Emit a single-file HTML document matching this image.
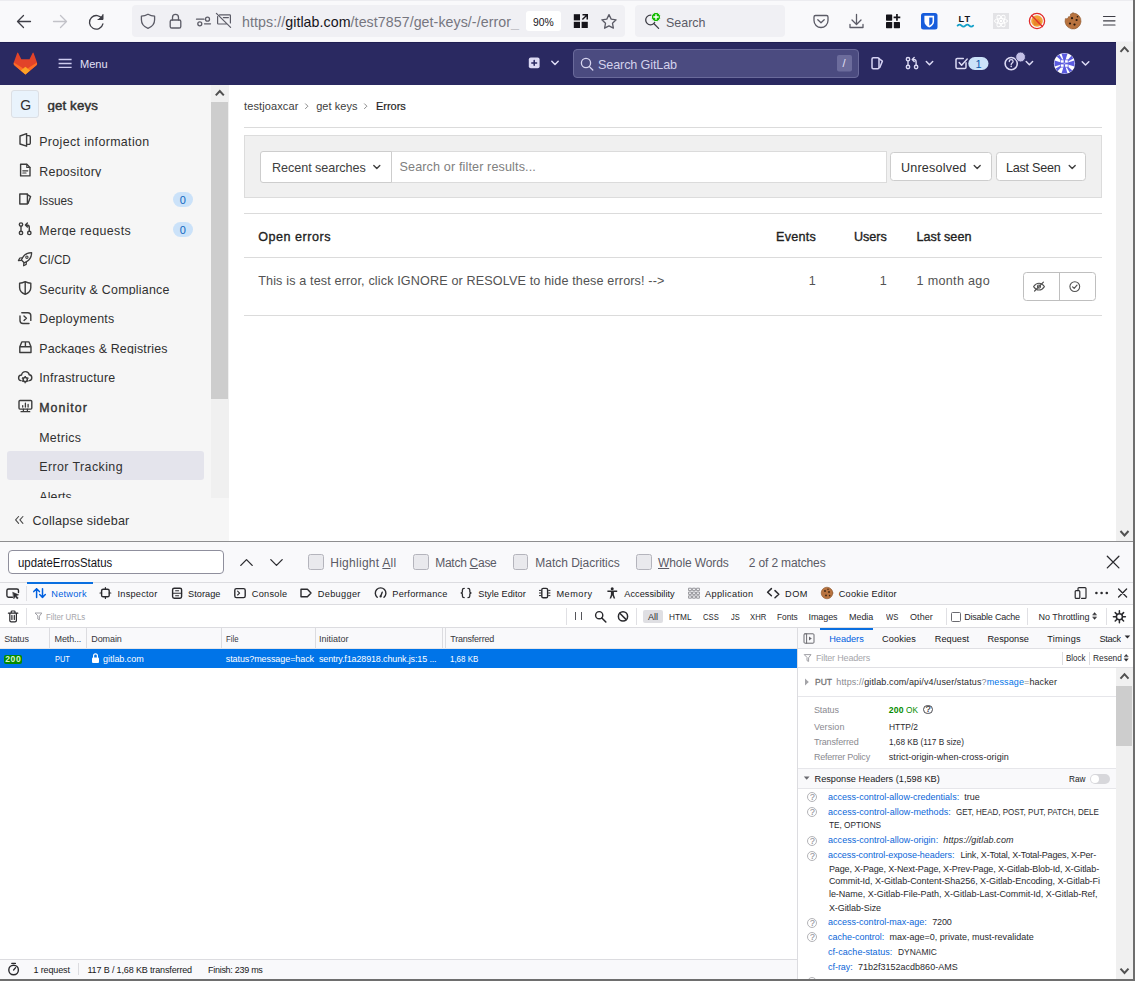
<!DOCTYPE html>
<html lang="en">
<head>
<meta charset="utf-8">
<title>Errors · get keys · GitLab</title>
<style>
*{box-sizing:border-box;margin:0;padding:0}
html,body{width:1135px;height:981px;overflow:hidden;background:#fff}
body{font-family:"Liberation Sans",sans-serif;color:#303030;position:relative;font-size:13px}
.a{position:absolute;white-space:nowrap}
svg{position:absolute;overflow:visible}
</style>
</head>
<body>
<div class="a" style="left:0px;top:0px;width:1133px;height:42px;background:#f9f9fb"></div>
<div class="a" style="left:132px;top:5px;width:493px;height:32px;background:#f0f0f4;border-radius:4px"></div>
<div class="a" style="left:635px;top:5px;width:150px;height:32px;background:#f0f0f4;border-radius:4px"></div>
<!-- ======== BROWSER CHROME ======== -->
<div class="a" style="left:0;top:0;width:1133px;height:1px;background:#ececf0"></div>
<div class="a" style="left:0;top:41px;width:1133px;height:1px;background:#f4f4f8"></div>
<svg style="left:0;top:0" width="1133" height="42" viewBox="0 0 1133 42" fill="none" stroke="#5b5b66" stroke-width="1.3" stroke-linecap="round" stroke-linejoin="round">
  <!-- back -->
  <path d="M30.5 21.5H17.5M23.5 15.5l-6 6 6 6" stroke="#3e3e46"/>
  <!-- forward (disabled) -->
  <path d="M53.5 21.5h13M60.5 15.5l6 6-6 6" stroke="#c2c2c8"/>
  <!-- reload -->
  <path d="M102.3 19.2a6.8 6.8 0 1 0 .6 4.6" stroke="#3e3e46"/>
  <path d="M103 14.5v5h-5" stroke="#3e3e46" fill="#3e3e46" stroke-width="1"/>
  <!-- shield -->
  <path d="M148 14.2c2.2 1.3 4.4 1.9 6.6 2v3.6c0 4-2.6 7-6.6 8.6-4-1.600-6.600-4.600-6.600-8.600v-3.600c2.200-.1 4.400-.7 6.600-2z"/>
  <!-- lock -->
  <rect x="170.200" y="20" width="10.600" height="8" rx="1.600"/>
  <path d="M172.500 20v-2.600a3 3 0 0 1 6 0V20"/>
  <!-- permissions -->
  <path d="M196.500 19.200h7.500M204.500 23.800h6"/>
  <circle cx="207.500" cy="19.200" r="2"/>
  <circle cx="199.800" cy="23.800" r="2"/>
  <!-- screen-share blocked -->
  <path d="M219.600 14.800h10a.8.800 0 0 1 .8.800v7.400M226.400 24h-8a.8.800 0 0 1-.8-.8v-6.600M223.400 17.600h5M216.400 13.400l14.200 14" stroke-width="1.200"/>
  <!-- container / qr icon -->
  <g fill="#15141a" stroke="none">
    <rect x="573.800" y="14.200" width="6.200" height="6.200"/>
    <rect x="573.800" y="21.800" width="6.200" height="6.200"/>
    <rect x="581.600" y="21.800" width="6.200" height="6.200"/>
    <path d="M582.500 14h5.500v5.500h-1.500v-3l-3.600 3.600-1-1 3.600-3.600h-3z"/>
  </g>
  <!-- star -->
  <path d="M609 14.600l2.200 4.500 4.900.7-3.600 3.500.9 4.900-4.400-2.300-4.400 2.300.9-4.900-3.600-3.500 4.900-.7z"/>
  <!-- search magnifier + green plus -->
  <circle cx="650.500" cy="20" r="4.800" stroke="#3e3e46"/>
  <path d="M654 23.800l4.600 4.600" stroke="#3e3e46"/>
  <circle cx="656" cy="17" r="4.600" fill="#12bc00" stroke="#f0f0f4" stroke-width="1"/>
  <path d="M653.800 17h4.400M656 14.800v4.400" stroke="#fff" stroke-width="1.400"/>
  <!-- pocket -->
  <path d="M815.500 15.500h11a1.500 1.500 0 0 1 1.500 1.500v3.500a7 7 0 0 1-14 0V17a1.500 1.500 0 0 1 1.500-1.500z"/>
  <path d="M817.800 19.800l3.200 3 3.200-3"/>
  <!-- download -->
  <path d="M856.500 14.500v9.500M852 20l4.500 4.500L861 20M850 24.500v3h13v-3"/>
  <!-- extensions -->
  <g fill="#15141a" stroke="none">
    <rect x="886" y="14.500" width="6.200" height="6.200" rx=".6"/>
    <rect x="886" y="22" width="6.200" height="6.200" rx=".6"/>
    <rect x="893.800" y="22" width="6.200" height="6.200" rx=".6"/>
    <path d="M896.100 14h1.700v2.500h2.500v1.700h-2.500v2.500h-1.700v-2.500h-2.500v-1.700h2.500z"/>
  </g>
  <!-- bitwarden -->
  <rect x="921" y="13" width="16.500" height="16.500" rx="2.500" fill="#175ddc" stroke="none"/>
  <path d="M924.400 15.800h9.700v5.600c0 2.800-2.200 4.800-4.850 6-2.650-1.200-4.850-3.200-4.850-6z" fill="#fff" stroke="none"/>
  <path d="M929.250 17.400h3.300v4.100c0 1.800-1.400 3.200-3.300 4.200z" fill="#175ddc" stroke="none"/>
  <!-- languagetool wave -->
  <path d="M957.600 25.600c1.300-1.400 2.600-1.400 3.900 0s2.600 1.400 3.900 0 2.600-1.400 3.900 0 2.600 1.400 3.900 0" stroke="#14a0c8" stroke-width="1.800"/>
  <!-- react devtools (disabled) -->
  <rect x="993" y="13" width="16" height="16" fill="#e3e3e6" stroke="none"/>
  <g stroke="#fff" stroke-width="1" >
    <ellipse cx="1001" cy="21" rx="6.500" ry="2.500"/>
    <ellipse cx="1001" cy="21" rx="6.500" ry="2.500" transform="rotate(60 1001 21)"/>
    <ellipse cx="1001" cy="21" rx="6.500" ry="2.500" transform="rotate(120 1001 21)"/>
  </g>
  <circle cx="1001" cy="21" r="1.200" fill="#fff" stroke="none"/>
  <!-- cookie blocker -->
  <circle cx="1037" cy="21" r="5.800" fill="#f2a23a" stroke="none"/>
  <path d="M1033 19.500l3 1.500 2-2.500 3 3-2 3.500-5 .5z" fill="#e8862a" stroke="none"/>
  <circle cx="1037" cy="21" r="7.600" stroke="#e02b2b" stroke-width="1.300"/>
  <path d="M1031.600 15.600l10.800 10.800" stroke="#e02b2b" stroke-width="1.400"/>
  <!-- cookie -->
  <path d="M1073 13a8 8 0 1 1-7.600 5.600c1.500.6 3-.3 3-1.800 1.600.1 2.500-1.200 2-2.600.9-.5 1.700-.9 2.600-1.200z" fill="#b8733f" stroke="#8a5226" stroke-width=".6"/>
  <g fill="#2a1a10" stroke="none">
    <circle cx="1072" cy="18.200" r="1.100"/><circle cx="1076.600" cy="20" r="1.100"/>
    <circle cx="1070" cy="23.500" r="1.100"/><circle cx="1074.500" cy="24.600" r="1.100"/><circle cx="1077.500" cy="16.800" r=".8"/>
  </g>
  <!-- hamburger -->
  <path d="M1103.500 16.500h11.500M1103.500 20.800h11.500M1103.500 25h11.500" stroke="#3e3e46" stroke-width="1.200"/>
</svg>
<div class="a" id="t0" style="left:242px;top:12px;font-size:14.2px;line-height:20px;color:#76767f;letter-spacing:0.074px">https://<span style="color:#15141a">gitlab.com</span>/test7857/get-keys/-/error</div>
<div class="a" id="t1" style="left:511px;top:12px;font-size:14.2px;line-height:20px;color:#c4c4ca">_</div>
<div class="a" style="left:526px;top:11px;width:35px;height:19.5px;background:#fff;border-radius:3px"></div>
<div class="a" id="t2" style="left:533px;top:14px;font-size:11.2px;line-height:16px;color:#15141a;transform:scaleX(0.9261);transform-origin:0 50%">90%</div>
<div class="a" id="t3" style="left:666px;top:13px;font-size:13.6px;line-height:19px;color:#5b5b66;transform:scaleX(0.9169);transform-origin:0 50%">Search</div>
<div class="a" id="t4" style="left:958.4px;top:12px;font-size:9.2px;line-height:14px;color:#15141a;font-weight:bold;letter-spacing:1.127px">LT</div>
<div class="a" style="left:0px;top:42px;width:1116px;height:43px;background:#2a2961"></div>
<div class="a" style="left:0px;top:42px;width:1116px;height:1px;background:#1f1e52"></div>
<div class="a" style="left:1116px;top:42px;width:17px;height:499px;background:#f0f0f0"></div>
<!-- ======== GITLAB NAV ======== -->
<svg style="left:0;top:42px" width="1116" height="43" viewBox="0 42 1116 43" fill="none" stroke-linecap="round" stroke-linejoin="round">
  <!-- logo (tanuki) -->
  <g stroke="none">
    <path d="M17.200 52.900q.5-.7 1 .1l3.100 6.300h8.200l3.100-6.300q.5-.8 1-.1L37 62.400q.6 2-.8 3.200L25.400 74.500 14.600 65.600q-1.400-1.200-.8-3.200z" fill="#e24329"/>
    <path d="M13.800 62.400l7.600 4.800 4 3.200v4.100L14.600 65.600q-1.400-1.200-.8-3.200z" fill="#fc6d26"/>
    <path d="M37 62.400l-7.600 4.800-4 3.200v4.100l10.800-8.900q1.400-1.200.8-3.200z" fill="#fc6d26"/>
    <path d="M25.400 66.800l4.600 3.800-4.600 3.900-4.600-3.900z" fill="#fca326"/>
  </g>
  <!-- hamburger -->
  <path d="M58.600 59.500h13M58.600 63.500h13M58.600 67.400h13" stroke="#cfcdf0" stroke-width="1.400" stroke-linecap="butt"/>
  <!-- plus square -->
  <rect x="528.800" y="57.500" width="10.800" height="10.800" rx="2" fill="#dcdaf4" stroke="none"/>
  <path d="M531.800 62.900h4.800M534.200 60.500v4.800" stroke="#292961" stroke-width="1.500"/>
  <path d="M551.800 61.300l3.200 3.200 3.200-3.200" stroke="#dcdaf4" stroke-width="1.500"/>
  <!-- search box -->
  <rect x="573.500" y="49.500" width="285" height="28" rx="3.500" fill="#4b4b80" stroke="#6a6a9b" stroke-width="1"/>
  <circle cx="586" cy="63" r="4.600" stroke="#d8d6f0" stroke-width="1.300"/>
  <path d="M589.400 66.600l3.400 3.400" stroke="#d8d6f0" stroke-width="1.300"/>
  <rect x="837" y="55" width="15" height="16.500" rx="2" fill="#6c6c9c" stroke="none"/>
  <!-- issues icon -->
  <rect x="872" y="57.800" width="7" height="10.900" rx="1.200" stroke="#d5d2f3" stroke-width="1.500"/>
  <path d="M879 58.600l3.400 2.500-2.600 6.400" stroke="#d5d2f3" stroke-width="1.500"/>
  <!-- merge request icon -->
  <g stroke="#dcdaf4" stroke-width="1.400">
    <circle cx="908" cy="59.200" r="1.700"/><circle cx="908" cy="67" r="1.700"/><circle cx="916.100" cy="67" r="1.700"/>
    <path d="M908 61v4.200M916.100 65.200v-3.400c0-1.500-.8-2.400-2.400-2.400h-1.200M914.200 57.400l-2 2 2 2"/>
    <path d="M926.300 61.500l3.200 3.200 3.200-3.200" stroke-width="1.500"/>
  </g>
  <!-- todos icon -->
  <path d="M966 62.800v4.400a1.300 1.300 0 0 1-1.300 1.300h-7.400a1.300 1.300 0 0 1-1.300-1.300v-7.400a1.300 1.300 0 0 1 1.300-1.300h6" stroke="#dcdaf4" stroke-width="1.500"/>
  <path d="M959.200 62.600l2.400 2.600 5.600-6.200" stroke="#dcdaf4" stroke-width="1.500"/>
  <rect x="968.300" y="57" width="20.200" height="13" rx="6.500" fill="#cbe2f9" stroke="none"/>
  <!-- help -->
  <circle cx="1011.200" cy="63.600" r="6.100" stroke="#dcdaf4" stroke-width="1.600"/>
  <path d="M1009.300 61.500c0-1.100.8-1.800 1.900-1.800s1.900.7 1.900 1.700c0 1.500-1.900 1.500-1.900 3" stroke="#dcdaf4" stroke-width="1.300"/>
  <circle cx="1011.200" cy="66.400" r=".8" fill="#dcdaf4" stroke="none"/>
  <circle cx="1020.600" cy="57" r="4.900" fill="#c3c0e6" stroke="#2a2961" stroke-width=".8"/>
  <path d="M1026.200 61.500l3.200 3.200 3.200-3.200" stroke="#dcdaf4" stroke-width="1.500"/>
  <!-- avatar (identicon) -->
  <circle cx="1064.500" cy="63.500" r="10.600" fill="#fff" stroke="none"/>
  <g fill="#5b5be0" stroke="none">
    <path d="M1064.500 63.500l-3-10 6 0z"/><path d="M1064.500 63.500l3 10-6 0z"/>
    <path d="M1064.500 63.500l-10-3 0 6z"/><path d="M1064.500 63.500l10 3 0-6z"/>
    <path d="M1064.500 63.500l-7.800-7 2.800-1.800z"/><path d="M1064.500 63.500l7.800 7-2.800 1.800z"/>
    <path d="M1064.500 63.500l7-7.800 1.800 2.800z"/><path d="M1064.500 63.500l-7 7.800-1.800-2.800z"/>
  </g>
  <g fill="#fff" stroke="#5b5be0" stroke-width=".7">
    <rect x="1060.800" y="59.800" width="3.200" height="3.200"/><rect x="1065" y="59.800" width="3.200" height="3.200"/>
    <rect x="1060.800" y="64" width="3.200" height="3.200"/><rect x="1065" y="64" width="3.200" height="3.200"/>
  </g>
  <path d="M1082.200 61.700l3.300 3.300 3.300-3.300" stroke="#dcdaf4" stroke-width="1.500"/>
</svg>
<div class="a" id="t5" style="left:80.2px;top:56px;font-size:11.6px;line-height:16px;color:#e3e1f7;transform:scaleX(0.9512);transform-origin:0 50%">Menu</div>
<div class="a" id="t6" style="left:598px;top:56px;font-size:12.6px;line-height:18px;color:#d4d2ec;letter-spacing:-0.117px">Search GitLab</div>
<div class="a" id="t7" style="left:842.5px;top:55px;font-size:11px;line-height:16px;color:#e3e1f7">/</div>
<div class="a" id="t8" style="left:975.5px;top:56px;font-size:11px;line-height:16px;color:#0b5cad">1</div>
<div class="a" style="left:0px;top:85px;width:229px;height:456px;background:#f6f6f6"></div>
<div class="a" style="left:211px;top:85px;width:18px;height:413px;background:#f0f0f0"></div>
<div class="a" style="left:211px;top:102px;width:17px;height:296.5px;background:#cdcdcd"></div>
<div class="a" style="left:7px;top:451px;width:197px;height:28.6px;background:#e4e4ec;border-radius:3px"></div>
<div class="a" style="left:11px;top:90px;width:28px;height:28px;background:#e9f3fc;border:1px solid #dcdfe4;border-radius:3px"></div>
<div class="a" id="t9" style="left:20.3px;top:95px;font-size:14px;line-height:20px;color:#303030">G</div>
<div class="a" id="t10" style="left:47.4px;top:96px;font-size:13.3px;line-height:19px;color:#303030;letter-spacing:0.134px;-webkit-text-stroke:0.45px currentColor;height:15.6px;overflow:hidden">get keys</div>
<div class="a" id="t11" style="left:39.2px;top:133px;font-size:12.4px;line-height:18px;color:#303030;letter-spacing:0.373px">Project information</div>
<div class="a" id="t12" style="left:39.2px;top:163px;font-size:12.4px;line-height:18px;color:#303030;letter-spacing:0.317px;height:14.3px;overflow:hidden">Repository</div>
<div class="a" id="t13" style="left:39.2px;top:192px;font-size:12.4px;line-height:18px;color:#303030;transform:scaleX(0.9494);transform-origin:0 50%">Issues</div>
<div class="a" id="t14" style="left:39.2px;top:222px;font-size:12.4px;line-height:18px;color:#303030;letter-spacing:0.422px;height:14.3px;overflow:hidden">Merge requests</div>
<div class="a" id="t15" style="left:39.2px;top:251px;font-size:12.4px;line-height:18px;color:#303030;transform:scaleX(0.9427);transform-origin:0 50%">CI/CD</div>
<div class="a" id="t16" style="left:39.2px;top:281px;font-size:12.4px;line-height:18px;color:#303030;letter-spacing:0.246px;height:14.3px;overflow:hidden">Security &amp; Compliance</div>
<div class="a" id="t17" style="left:39.2px;top:310px;font-size:12.4px;line-height:18px;color:#303030;letter-spacing:0.272px">Deployments</div>
<div class="a" id="t18" style="left:39.2px;top:340px;font-size:12.4px;line-height:18px;color:#303030;letter-spacing:0.178px;height:14.3px;overflow:hidden">Packages &amp; Registries</div>
<div class="a" id="t19" style="left:39.2px;top:369px;font-size:12.4px;line-height:18px;color:#303030;letter-spacing:0.236px">Infrastructure</div>
<div class="a" id="t20" style="left:39.2px;top:399px;font-size:12.4px;line-height:18px;color:#303030;letter-spacing:1.053px;-webkit-text-stroke:0.35px currentColor">Monitor</div>
<div class="a" id="t21" style="left:39.2px;top:429px;font-size:12.4px;line-height:18px;color:#303030;letter-spacing:0.323px">Metrics</div>
<div class="a" id="t22" style="left:39.2px;top:458px;font-size:12.4px;line-height:18px;color:#303030;letter-spacing:0.428px">Error Tracking</div>
<div class="a" id="t23" style="left:39.2px;top:488px;font-size:12.4px;line-height:18px;color:#303030;letter-spacing:0.185px;height:9.9px;overflow:hidden">Alerts</div>
<div class="a" style="left:172.7px;top:192.3px;width:20.2px;height:15px;background:#cbe2f9;border-radius:8px"></div>
<div class="a" id="t24" style="left:179.7px;top:192px;font-size:11px;line-height:16px;color:#1068bf">0</div>
<div class="a" style="left:172.7px;top:222px;width:20.2px;height:15px;background:#cbe2f9;border-radius:8px"></div>
<div class="a" id="t25" style="left:179.7px;top:222px;font-size:11px;line-height:16px;color:#1068bf">0</div>
<div class="a" id="t26" style="left:32.5px;top:512px;font-size:12.6px;line-height:18px;color:#303030;letter-spacing:0.199px">Collapse sidebar</div>
<svg style="left:0;top:85px" width="229" height="456" viewBox="0 85 229 456" fill="none" stroke="#3c3c3c" stroke-width="1.4" stroke-linecap="round" stroke-linejoin="round">
  <!-- project information -->
  <path d="M20 136l6.600-2.400v12.600L20 144z"/>
  <path d="M26.600 135.600h2.400a1.300 1.300 0 0 1 1.300 1.300v6.200a1.300 1.300 0 0 1-1.300 1.300h-2.400"/>
  <!-- repository -->
  <path d="M20.600 164.300h6.200l3.200 3.200v8.400h-9.400z"/>
  <path d="M26.800 164.300v3.200h3.200" stroke-width="1.200"/>
  <path d="M22.800 170.800h5M22.800 173h3.200" stroke-width="1.200"/>
  <!-- issues -->
  <path d="M19.800 194h7.600v10h-7.600z"/>
  <path d="M27.400 194.600l3.200 2-2.600 6.800" />
  <!-- merge requests -->
  <circle cx="21" cy="224.600" r="1.700"/><circle cx="21" cy="232.900" r="1.700"/><circle cx="29.300" cy="232.900" r="1.700"/>
  <path d="M21 226.400v4.700M29.300 231.100v-3.600c0-1.600-.8-2.500-2.400-2.500h-1M27.400 223l-2 2 2 2"/>
  <!-- ci/cd rocket -->
  <path d="M31.600 252.600c-3.800 0-7 1.500-9 5l-1.200 2.400 2.800 2.800 2.400-1.200c3.500-2 5-5.200 5-9z" stroke-width="1.300"/>
  <path d="M22.400 257.800l-2.600.2-1.400 2.600 2.800-.2M26.400 261.800l-.2 2.600-2.600 1.400.2-2.800" stroke-width="1.200"/>
  <circle cx="26.900" cy="257.200" r="1.150" stroke-width="1.100"/>
  <!-- security -->
  <path d="M25.200 281.700c2 1 3.800 1.500 5.600 1.600v4.100c0 3.300-2.200 5.500-5.600 6.900-3.400-1.400-5.600-3.600-5.600-6.900v-4.100c1.800-.1 3.600-.6 5.600-1.600zM25.200 281.700v12.600"/>
  <!-- deployments -->
  <path d="M21.800 312.800h6a3 3 0 0 1 3 3v4.600M29 323.500h-6a3 3 0 0 1-3-3v-4.600"/>
  <path d="M24 316l2.400 2.200-2.400 2.200"/>
  <!-- packages -->
  <path d="M21.800 341.900h7.200l2 4.800v5.800h-11.200v-5.800zM19.800 346.700h11.200M25.400 341.900v4.800"/>
  <!-- infrastructure -->
  <path d="M21 380.600c-1.600-.2-2.400-1.400-2.400-2.700 0-1.700 1.300-2.900 2.900-2.900.5-2.200 2-3.400 3.900-3.400 2 0 3.500 1.300 3.900 3.200 1.600.2 2.500 1.400 2.500 2.900 0 1.500-1 2.700-2.500 2.900"/>
  <circle cx="25.2" cy="379.6" r="2.100" stroke-width="1.500" fill="#f6f6f6"/>
  <path d="M27.45 380.90L28.40 381.45M25.20 382.20L25.20 383.30M22.95 380.90L22.00 381.45M22.95 378.30L22.00 377.75M25.20 377.00L25.20 375.90M27.45 378.30L28.40 377.75" stroke-width="1.500" stroke-linecap="butt"/>
  <!-- monitor -->
  <rect x="19" y="400.500" width="12.800" height="8.600" rx="1"/>
  <path d="M23.400 409.200v2.200M27.400 409.200v2.200M21 411.700h8.800" stroke-width="1.200"/>
  <path d="M22.700 405.600v1.400M25.400 403.200v3.800M28.100 404.400v2.600" stroke-width="1.300"/>
  <!-- collapse chevrons -->
  <path d="M18.600 516.500l-3 3.400 3 3.400M22.900 516.500l-3 3.400 3 3.400" stroke="#4a4a4a" stroke-width="1.100"/>
  <!-- scrollbar arrow -->
  <path d="M215.800 95.400l4-4.400 4 4.400" stroke="#505050" stroke-width="2" stroke-linecap="butt" stroke-linejoin="miter"/>
</svg>
<div class="a" id="t27" style="left:244px;top:98px;font-size:11px;line-height:16px;color:#404040;letter-spacing:0.118px">testjoaxcar</div>
<div class="a" id="t28" style="left:316.2px;top:98px;font-size:11px;line-height:16px;color:#404040;letter-spacing:0.041px">get keys</div>
<div class="a" id="t29" style="left:376px;top:98px;font-size:11px;line-height:16px;color:#1f1f1f;letter-spacing:-0.026px;-webkit-text-stroke:0.2px currentColor">Errors</div>
<div class="a" style="left:244px;top:127px;width:858px;height:1px;background:#dbdbdb"></div>
<div class="a" style="left:244px;top:135px;width:858px;height:63px;background:#f0f0f0;border:1px solid #dcdcdc"></div>
<div class="a" style="left:260px;top:151px;width:132px;height:31.5px;background:#fff;border:1px solid #cdcdcd;border-radius:3px 0 0 3px"></div>
<div class="a" style="left:391px;top:151px;width:496px;height:31.5px;background:#fff;border:1px solid #dbdbdb;border-left:1px solid #cdcdcd"></div>
<div class="a" id="t30" style="left:272px;top:159px;font-size:12.6px;line-height:18px;color:#404040;letter-spacing:-0.048px">Recent searches</div>
<div class="a" id="t31" style="left:399.5px;top:158px;font-size:12.6px;line-height:18px;color:#808080;letter-spacing:0.130px">Search or filter results...</div>
<div class="a" style="left:890px;top:152px;width:101.5px;height:29px;background:#fff;border:1px solid #cdcdcd;border-radius:3.5px"></div>
<div class="a" style="left:996px;top:152px;width:89.5px;height:29px;background:#fff;border:1px solid #cdcdcd;border-radius:3.5px"></div>
<div class="a" id="t32" style="left:901px;top:159px;font-size:12.6px;line-height:18px;color:#303030;letter-spacing:0.180px">Unresolved</div>
<div class="a" id="t33" style="left:1006px;top:159px;font-size:12.6px;line-height:18px;color:#303030;letter-spacing:-0.247px">Last Seen</div>
<div class="a" style="left:244px;top:213px;width:858px;height:1px;background:#dbdbdb"></div>
<div class="a" id="t34" style="left:258.2px;top:228px;font-size:12.6px;line-height:18px;color:#1f1f1f;letter-spacing:0.509px;-webkit-text-stroke:0.35px currentColor">Open errors</div>
<div class="a" id="t35" style="left:776px;top:228px;font-size:12.6px;line-height:18px;color:#1f1f1f;letter-spacing:0.247px;-webkit-text-stroke:0.35px currentColor">Events</div>
<div class="a" id="t36" style="left:854px;top:228px;font-size:12.6px;line-height:18px;color:#1f1f1f;letter-spacing:-0.018px;-webkit-text-stroke:0.35px currentColor">Users</div>
<div class="a" id="t37" style="left:916.5px;top:228px;font-size:12.6px;line-height:18px;color:#1f1f1f;letter-spacing:0.042px;-webkit-text-stroke:0.35px currentColor">Last seen</div>
<div class="a" style="left:244px;top:257px;width:858px;height:1px;background:#dbdbdb"></div>
<div class="a" id="t38" style="left:258.2px;top:272px;font-size:12.6px;line-height:18px;color:#525252;letter-spacing:0.142px">This is a test error, click IGNORE or RESOLVE to hide these errors! --&gt;</div>
<div class="a" id="t39" style="left:808.7px;top:272px;font-size:12.6px;line-height:18px;color:#525252">1</div>
<div class="a" id="t40" style="left:879.7px;top:272px;font-size:12.6px;line-height:18px;color:#525252">1</div>
<div class="a" id="t41" style="left:916.5px;top:272px;font-size:12.6px;line-height:18px;color:#525252;letter-spacing:0.315px">1 month ago</div>
<div class="a" style="left:1023px;top:272px;width:73px;height:29px;background:#fff;border:1px solid #bfbfbf;border-radius:3.5px"></div>
<div class="a" style="left:1059px;top:272px;width:1px;height:29px;background:#bfbfbf"></div>
<div class="a" style="left:244px;top:315px;width:858px;height:1px;background:#dbdbdb"></div>
<svg style="left:229px;top:85px" width="887" height="456" viewBox="229 85 887 456" fill="none" stroke="#525252" stroke-width="1.200" stroke-linecap="round" stroke-linejoin="round">
  <!-- breadcrumb separators -->
  <path d="M305.500 103.800l2.400 2.400-2.400 2.400M364.500 103.800l2.400 2.400-2.400 2.400" stroke="#8a8a8a" stroke-width="1"/>
  <!-- dropdown chevrons -->
  <path d="M373.800 165.600l3 3 3-3" stroke="#404040" stroke-width="1.400"/>
  <path d="M974.200 165.600l3 3 3-3" stroke="#404040" stroke-width="1.400"/>
  <path d="M1069.200 165.600l3 3 3-3" stroke="#404040" stroke-width="1.400"/>
  <!-- eye-slash -->
  <path d="M1033.600 286.600c1.400-2.300 3.200-3.400 5.400-3.400s4 1.100 5.400 3.400c-1.400 2.300-3.200 3.400-5.400 3.400s-4-1.100-5.400-3.400z" stroke-width="1.100"/>
  <circle cx="1039" cy="286.600" r="1.600" stroke-width="1.100"/>
  <path d="M1034.600 291l8.800-8.800" stroke-width="1.200"/>
  <!-- check circle -->
  <circle cx="1074.800" cy="286.600" r="4.900" stroke-width="1.100"/>
  <path d="M1072.600 286.800l1.600 1.600 2.800-3.200" stroke-width="1.200"/>
  <!-- page scrollbar arrows -->
  <path d="M1120.500 51.800l4-4.400 4 4.400" stroke="#505050" stroke-width="2" stroke-linecap="butt" stroke-linejoin="miter"/>
  <path d="M1120.500 531l4 4.400 4-4.400" stroke="#505050" stroke-width="2" stroke-linecap="butt" stroke-linejoin="miter"/>
</svg>
<div class="a" style="left:0px;top:541px;width:1133px;height:1px;background:#8e8e90"></div>
<div class="a" style="left:0px;top:542px;width:1133px;height:40px;background:#f9f9fb"></div>
<div class="a" style="left:8px;top:550px;width:215.5px;height:24px;background:#fff;border:1px solid #8f8f9d;border-radius:4px"></div>
<div class="a" id="t42" style="left:17.5px;top:554px;font-size:12px;line-height:18px;color:#15141a;transform:scaleX(0.9486);transform-origin:0 50%">updateErrosStatus</div>
<div class="a" style="left:308.25px;top:554.25px;width:15.5px;height:15.5px;background:#e9e9ed;border:1px solid #b4b4bc;border-radius:2.5px"></div>
<div class="a" style="left:413.25px;top:554.25px;width:15.5px;height:15.5px;background:#e9e9ed;border:1px solid #b4b4bc;border-radius:2.5px"></div>
<div class="a" style="left:512.75px;top:554.25px;width:15.5px;height:15.5px;background:#e9e9ed;border:1px solid #b4b4bc;border-radius:2.5px"></div>
<div class="a" style="left:636px;top:554.25px;width:15.5px;height:15.5px;background:#e9e9ed;border:1px solid #b4b4bc;border-radius:2.5px"></div>
<div class="a" id="t43" style="left:330.25px;top:554px;font-size:12px;line-height:18px;color:#5b5b66;letter-spacing:0.270px">Highlight <u>A</u>ll</div>
<div class="a" id="t44" style="left:435.25px;top:554px;font-size:12px;line-height:18px;color:#5b5b66;letter-spacing:-0.280px">Match <u>C</u>ase</div>
<div class="a" id="t45" style="left:535.25px;top:554px;font-size:12px;line-height:18px;color:#5b5b66;letter-spacing:-0.013px">Match D<u>i</u>acritics</div>
<div class="a" id="t46" style="left:658px;top:554px;font-size:12px;line-height:18px;color:#5b5b66;letter-spacing:-0.097px"><u>W</u>hole Words</div>
<div class="a" id="t47" style="left:748.75px;top:554px;font-size:12px;line-height:18px;color:#5b5b66;letter-spacing:-0.141px">2 of 2 matches</div>
<div class="a" style="left:0px;top:582px;width:1133px;height:22.5px;background:#f9f9fb;border-top:1px solid #dcdce0"></div>
<div class="a" style="left:0px;top:604px;width:1133px;height:1px;background:#dcdce0"></div>
<div class="a" style="left:27px;top:582px;width:65.5px;height:2px;background:#0a6fe0"></div>
<div class="a" style="left:26px;top:586px;width:1px;height:15px;background:#e0e0e4"></div>
<div class="a" id="t48" style="left:51.25px;top:587px;font-size:9.2px;line-height:14px;color:#0060df;letter-spacing:0.257px">Network</div>
<div class="a" id="t49" style="left:117.5px;top:587px;font-size:9.2px;line-height:14px;color:#18181a;letter-spacing:0.245px">Inspector</div>
<div class="a" id="t50" style="left:188px;top:587px;font-size:9.2px;line-height:14px;color:#18181a;letter-spacing:0.045px">Storage</div>
<div class="a" id="t51" style="left:251.75px;top:587px;font-size:9.2px;line-height:14px;color:#18181a;letter-spacing:0.290px">Console</div>
<div class="a" id="t52" style="left:317.75px;top:587px;font-size:9.2px;line-height:14px;color:#18181a;letter-spacing:0.330px">Debugger</div>
<div class="a" id="t53" style="left:392.25px;top:587px;font-size:9.2px;line-height:14px;color:#18181a;letter-spacing:0.263px">Performance</div>
<div class="a" id="t54" style="left:478.25px;top:587px;font-size:9.2px;line-height:14px;color:#18181a;letter-spacing:0.043px">Style Editor</div>
<div class="a" id="t55" style="left:556.5px;top:587px;font-size:9.2px;line-height:14px;color:#18181a;letter-spacing:0.469px">Memory</div>
<div class="a" id="t56" style="left:624.25px;top:587px;font-size:9.2px;line-height:14px;color:#18181a;letter-spacing:0.035px">Accessibility</div>
<div class="a" id="t57" style="left:705px;top:587px;font-size:9.2px;line-height:14px;color:#18181a;letter-spacing:0.322px">Application</div>
<div class="a" id="t58" style="left:785px;top:587px;font-size:9.2px;line-height:14px;color:#18181a;letter-spacing:0.521px">DOM</div>
<div class="a" id="t59" style="left:838.75px;top:587px;font-size:9.2px;line-height:14px;color:#18181a;letter-spacing:0.230px">Cookie Editor</div>
<div class="a" style="left:0px;top:605px;width:1133px;height:22.5px;background:#fff"></div>
<div class="a" style="left:0px;top:627px;width:1133px;height:1px;background:#dcdce0"></div>
<div class="a" style="left:26px;top:608px;width:1px;height:17px;background:#e0e0e4"></div>
<div class="a" id="t60" style="left:46.25px;top:610px;font-size:9.2px;line-height:14px;color:#a6a6ab;transform:scaleX(0.8541);transform-origin:0 50%">Filter URLs</div>
<div class="a" style="left:565.5px;top:608px;width:1px;height:17px;background:#e0e0e4"></div>
<div class="a" style="left:635.5px;top:608px;width:1px;height:17px;background:#e0e0e4"></div>
<div class="a" style="left:643px;top:609.75px;width:20px;height:13px;background:#dfdfe3;border-radius:2px"></div>
<div class="a" id="t61" style="left:648px;top:610px;font-size:9px;line-height:14px;color:#2a2a2e;letter-spacing:-0.005px">All</div>
<div class="a" id="t62" style="left:668.75px;top:610px;font-size:9px;line-height:14px;color:#2a2a2e;transform:scaleX(0.9184);transform-origin:0 50%">HTML</div>
<div class="a" id="t63" style="left:703px;top:610px;font-size:9px;line-height:14px;color:#2a2a2e;transform:scaleX(0.8506);transform-origin:0 50%">CSS</div>
<div class="a" id="t64" style="left:730.5px;top:610px;font-size:9px;line-height:14px;color:#2a2a2e;transform:scaleX(0.8321);transform-origin:0 50%">JS</div>
<div class="a" id="t65" style="left:749.75px;top:610px;font-size:9px;line-height:14px;color:#2a2a2e;transform:scaleX(0.8546);transform-origin:0 50%">XHR</div>
<div class="a" id="t66" style="left:776.75px;top:610px;font-size:9px;line-height:14px;color:#2a2a2e;transform:scaleX(0.9216);transform-origin:0 50%">Fonts</div>
<div class="a" id="t67" style="left:808.5px;top:610px;font-size:9px;line-height:14px;color:#2a2a2e;letter-spacing:-0.086px">Images</div>
<div class="a" id="t68" style="left:849px;top:610px;font-size:9px;line-height:14px;color:#2a2a2e;letter-spacing:-0.063px">Media</div>
<div class="a" id="t69" style="left:886.2px;top:610px;font-size:9px;line-height:14px;color:#2a2a2e;transform:scaleX(0.8552);transform-origin:0 50%">WS</div>
<div class="a" id="t70" style="left:909.9px;top:610px;font-size:9px;line-height:14px;color:#2a2a2e;letter-spacing:0.117px">Other</div>
<div class="a" style="left:945.5px;top:608px;width:1px;height:17px;background:#e0e0e4"></div>
<div class="a" style="left:951.3px;top:612px;width:9.7px;height:9.7px;background:#fff;border:1px solid #6a6a70;border-radius:1.5px"></div>
<div class="a" id="t71" style="left:964.2px;top:610px;font-size:9px;line-height:14px;color:#2a2a2e;letter-spacing:-0.225px">Disable Cache</div>
<div class="a" style="left:1026.6px;top:608px;width:1px;height:17px;background:#e0e0e4"></div>
<div class="a" id="t72" style="left:1038.5px;top:610px;font-size:9px;line-height:14px;color:#2a2a2e;letter-spacing:-0.035px">No Throttling</div>
<div class="a" style="left:1106.4px;top:608px;width:1px;height:17px;background:#e0e0e4"></div>
<div class="a" style="left:0px;top:628px;width:797px;height:20.5px;background:#f9f9fb"></div>
<div class="a" style="left:0px;top:648px;width:797px;height:1px;background:#e6e6ea"></div>
<div class="a" style="left:49.25px;top:628px;width:1px;height:20px;background:#dcdce0"></div>
<div class="a" style="left:86.25px;top:628px;width:1px;height:20px;background:#dcdce0"></div>
<div class="a" style="left:221.25px;top:628px;width:1px;height:20px;background:#dcdce0"></div>
<div class="a" style="left:314.5px;top:628px;width:1px;height:20px;background:#dcdce0"></div>
<div class="a" style="left:441.5px;top:628px;width:1px;height:20px;background:#dcdce0"></div>
<div class="a" style="left:445px;top:628px;width:1px;height:20px;background:#dcdce0"></div>
<div class="a" id="t73" style="left:4.25px;top:632px;font-size:9px;line-height:14px;color:#38383d;letter-spacing:-0.169px">Status</div>
<div class="a" id="t74" style="left:54.5px;top:632px;font-size:9px;line-height:14px;color:#38383d;letter-spacing:-0.109px">Meth...</div>
<div class="a" id="t75" style="left:91.25px;top:632px;font-size:9px;line-height:14px;color:#38383d;letter-spacing:-0.086px">Domain</div>
<div class="a" id="t76" style="left:225.75px;top:632px;font-size:9px;line-height:14px;color:#38383d;transform:scaleX(0.8611);transform-origin:0 50%">File</div>
<div class="a" id="t77" style="left:319px;top:632px;font-size:9px;line-height:14px;color:#38383d;letter-spacing:-0.002px">Initiator</div>
<div class="a" id="t78" style="left:450.25px;top:632px;font-size:9px;line-height:14px;color:#38383d;letter-spacing:-0.222px">Transferred</div>
<div class="a" style="left:0px;top:649px;width:797px;height:19px;background:#0074e8"></div>
<div class="a" style="left:4.25px;top:654.5px;width:18px;height:9.5px;background:#058b00;border-radius:2px"></div>
<div class="a" id="t79" style="left:5.2px;top:652px;font-size:8.6px;line-height:14px;color:#d8f5d0;font-weight:bold;letter-spacing:0.619px;font-family:"Liberation Mono",monospace">200</div>
<div class="a" id="t80" style="left:54.5px;top:652px;font-size:9px;line-height:14px;color:#fff;transform:scaleX(0.8194);transform-origin:0 50%">PUT</div>
<div class="a" id="t81" style="left:103px;top:652px;font-size:9px;line-height:14px;color:#fff;letter-spacing:-0.028px">gitlab.com</div>
<div class="a" id="t82" style="left:225.75px;top:652px;font-size:9px;line-height:14px;color:#fff;letter-spacing:-0.082px">status?message=hack</div>
<div class="a" id="t83" style="left:319px;top:652px;font-size:9px;line-height:14px;color:#fff;letter-spacing:-0.143px">sentry.f1a28918.chunk.js:15 ...</div>
<div class="a" id="t84" style="left:450.25px;top:652px;font-size:9px;line-height:14px;color:#fff;transform:scaleX(0.8820);transform-origin:0 50%">1,68 KB</div>
<div class="a" style="left:0px;top:668px;width:797px;height:291px;background:#fff"></div>
<div class="a" style="left:0px;top:959px;width:797px;height:20px;background:#f9f9fb;border-top:1px solid #dcdce0"></div>
<div class="a" id="t85" style="left:33.5px;top:963px;font-size:9px;line-height:14px;color:#18181a;letter-spacing:-0.137px">1 request</div>
<div class="a" style="left:78px;top:963px;width:1px;height:12px;background:#dcdce0"></div>
<div class="a" id="t86" style="left:87.4px;top:963px;font-size:9px;line-height:14px;color:#18181a;letter-spacing:-0.141px">117 B / 1,68 KB transferred</div>
<div class="a" id="t87" style="left:208px;top:963px;font-size:9px;line-height:14px;color:#18181a;letter-spacing:-0.281px">Finish: 239 ms</div>
<div class="a" style="left:797px;top:628px;width:336px;height:351px;background:#fff;border-left:1px solid #dcdce0"></div>
<div class="a" style="left:798px;top:628px;width:335px;height:20px;background:#f9f9fb"></div>
<div class="a" style="left:798px;top:648px;width:335px;height:1px;background:#e0e0e4"></div>
<div class="a" style="left:819.75px;top:628px;width:53px;height:2px;background:#0a6fe0"></div>
<div class="a" id="t88" style="left:829.25px;top:632px;font-size:9.2px;line-height:14px;color:#0060df;letter-spacing:-0.041px">Headers</div>
<div class="a" id="t89" style="left:882px;top:632px;font-size:9.2px;line-height:14px;color:#18181a;letter-spacing:0.114px">Cookies</div>
<div class="a" id="t90" style="left:934.8px;top:632px;font-size:9.2px;line-height:14px;color:#18181a;letter-spacing:0.024px">Request</div>
<div class="a" id="t91" style="left:987.4px;top:632px;font-size:9.2px;line-height:14px;color:#18181a;letter-spacing:0.028px">Response</div>
<div class="a" id="t92" style="left:1047.3px;top:632px;font-size:9.2px;line-height:14px;color:#18181a;letter-spacing:0.253px">Timings</div>
<div class="a" id="t93" style="left:1099.4px;top:632px;font-size:9.2px;line-height:14px;color:#18181a;width:22px;overflow:hidden;letter-spacing:-0.3px">Stack</div>
<div class="a" style="left:798px;top:667px;width:335px;height:1px;background:#e0e0e4"></div>
<div class="a" id="t94" style="left:816px;top:651px;font-size:9px;line-height:14px;color:#a6a6ab;letter-spacing:-0.181px">Filter Headers</div>
<div class="a" style="left:1061.5px;top:652px;width:1px;height:13px;background:#dcdce0"></div>
<div class="a" style="left:1089.4px;top:652px;width:1px;height:13px;background:#dcdce0"></div>
<div class="a" id="t95" style="left:1065.7px;top:651px;font-size:9px;line-height:14px;color:#2a2a2e;transform:scaleX(0.8857);transform-origin:0 50%">Block</div>
<div class="a" id="t96" style="left:1093.1px;top:651px;font-size:9px;line-height:14px;color:#2a2a2e;transform:scaleX(0.9313);transform-origin:0 50%">Resend</div>
<div class="a" id="t97" style="left:814.5px;top:675px;font-size:9.2px;line-height:14px;color:#737373;transform:scaleX(0.9252);transform-origin:0 50%;-webkit-text-stroke:0.3px currentColor">PUT</div>
<div class="a" id="t98" style="left:836.3px;top:675px;font-size:9px;line-height:14px;color:#2a2a2e;letter-spacing:0.113px"><span style="color:#8a8a90">https://</span>gitlab.com/api/v4/user/status<span style="color:#8a8a90">?</span><span style="color:#0074e8">message</span><span style="color:#8a8a90">=</span>hacker</div>
<div class="a" style="left:798px;top:696px;width:318px;height:1px;background:#e6e6ea"></div>
<div class="a" id="t99" style="left:813.9px;top:703px;font-size:9px;line-height:14px;color:#8a8a90;letter-spacing:-0.069px">Status</div>
<div class="a" id="t100" style="left:813.9px;top:720px;font-size:9px;line-height:14px;color:#8a8a90;letter-spacing:0.081px">Version</div>
<div class="a" id="t101" style="left:888.8px;top:720px;font-size:9px;line-height:14px;color:#2a2a2e;transform:scaleX(0.9350);transform-origin:0 50%">HTTP/2</div>
<div class="a" id="t102" style="left:813.9px;top:735px;font-size:9px;line-height:14px;color:#8a8a90;letter-spacing:-0.144px">Transferred</div>
<div class="a" id="t103" style="left:888.8px;top:735px;font-size:9px;line-height:14px;color:#2a2a2e;transform:scaleX(0.9148);transform-origin:0 50%">1,68 KB (117 B size)</div>
<div class="a" id="t104" style="left:813.9px;top:750px;font-size:9px;line-height:14px;color:#8a8a90;letter-spacing:-0.234px">Referrer Policy</div>
<div class="a" id="t105" style="left:888.8px;top:750px;font-size:9px;line-height:14px;color:#2a2a2e;letter-spacing:0.067px">strict-origin-when-cross-origin</div>
<div class="a" id="t106" style="left:888.8px;top:703px;font-size:8.6px;line-height:14px;color:#058b00;font-weight:bold;letter-spacing:0.152px;font-family:"Liberation Mono",monospace">200</div>
<div class="a" id="t107" style="left:905.8px;top:703px;font-size:9px;line-height:14px;color:#058b00;transform:scaleX(0.9220);transform-origin:0 50%">OK</div>
<div class="a" style="left:923.2px;top:704.6px;width:9.8px;height:9.8px;border:1px solid #4a4a50;border-radius:5px"></div>
<div class="a" id="t108" style="left:925.7px;top:702px;font-size:8.6px;line-height:14px;color:#3a3a40;-webkit-text-stroke:0.25px currentColor">?</div>
<div class="a" style="left:798px;top:768px;width:318px;height:20.5px;background:#f9f9fb;border-top:1px solid #e6e6ea;border-bottom:1px solid #e6e6ea"></div>
<div class="a" id="t109" style="left:814.5px;top:772px;font-size:9.2px;line-height:14px;color:#18181a;letter-spacing:0.003px">Response Headers (1,598 KB)</div>
<div class="a" id="t110" style="left:1069.1px;top:772px;font-size:9.2px;line-height:14px;color:#18181a;transform:scaleX(0.8972);transform-origin:0 50%">Raw</div>
<div class="a" style="left:1089.5px;top:773.7px;width:20px;height:10.3px;background:#d7d7db;border-radius:6px"></div>
<div class="a" style="left:1090.6px;top:774.8px;width:8.1px;height:8.1px;background:#fff;border-radius:5px"></div>
<div class="a" style="left:807.4px;top:792.1px;width:10px;height:10px;border:1px solid #b4b4b8;border-radius:5px"></div>
<div class="a" id="t111" style="left:809.9px;top:790px;font-size:8.6px;line-height:14px;color:#9a9aa0;-webkit-text-stroke:0.2px currentColor">?</div>
<div class="a" id="t112" style="left:828px;top:790px;font-size:9px;line-height:14px;color:#0a66d8;letter-spacing:0.019px">access-control-allow-credentials:</div>
<div class="a" id="t113" style="left:964.3px;top:790px;font-size:9px;line-height:14px;color:#2a2a2e;letter-spacing:-0.004px">true</div>
<div class="a" style="left:807.4px;top:807.1px;width:10px;height:10px;border:1px solid #b4b4b8;border-radius:5px"></div>
<div class="a" id="t114" style="left:809.9px;top:805px;font-size:8.6px;line-height:14px;color:#9a9aa0;-webkit-text-stroke:0.2px currentColor">?</div>
<div class="a" id="t115" style="left:828px;top:805px;font-size:9px;line-height:14px;color:#0a66d8;letter-spacing:0.043px">access-control-allow-methods:</div>
<div class="a" id="t116" style="left:956.2px;top:805px;font-size:9px;line-height:14px;color:#2a2a2e;transform:scaleX(0.8892);transform-origin:0 50%">GET, HEAD, POST, PUT, PATCH, DELE</div>
<div class="a" style="left:807.4px;top:835.6px;width:10px;height:10px;border:1px solid #b4b4b8;border-radius:5px"></div>
<div class="a" id="t117" style="left:809.9px;top:834px;font-size:8.6px;line-height:14px;color:#9a9aa0;-webkit-text-stroke:0.2px currentColor">?</div>
<div class="a" id="t118" style="left:828px;top:833px;font-size:9px;line-height:14px;color:#0a66d8;letter-spacing:0.041px">access-control-allow-origin:</div>
<div class="a" id="t119" style="left:943.3px;top:833px;font-size:9px;line-height:14px;color:#2a2a2e;letter-spacing:0.131px;font-style:italic">https://gitlab.com</div>
<div class="a" style="left:807.4px;top:850.6px;width:10px;height:10px;border:1px solid #b4b4b8;border-radius:5px"></div>
<div class="a" id="t120" style="left:809.9px;top:849px;font-size:8.6px;line-height:14px;color:#9a9aa0;-webkit-text-stroke:0.2px currentColor">?</div>
<div class="a" id="t121" style="left:828px;top:848px;font-size:9px;line-height:14px;color:#0a66d8;letter-spacing:-0.055px">access-control-expose-headers:</div>
<div class="a" id="t122" style="left:960.4px;top:848px;font-size:9px;line-height:14px;color:#2a2a2e;letter-spacing:-0.180px">Link, X-Total, X-Total-Pages, X-Per-</div>
<div class="a" style="left:807.4px;top:917.7px;width:10px;height:10px;border:1px solid #b4b4b8;border-radius:5px"></div>
<div class="a" id="t123" style="left:809.9px;top:916px;font-size:8.6px;line-height:14px;color:#9a9aa0;-webkit-text-stroke:0.2px currentColor">?</div>
<div class="a" id="t124" style="left:828px;top:915px;font-size:9px;line-height:14px;color:#0a66d8;letter-spacing:0.011px">access-control-max-age:</div>
<div class="a" id="t125" style="left:932.2px;top:915px;font-size:9px;line-height:14px;color:#2a2a2e;letter-spacing:-0.133px">7200</div>
<div class="a" style="left:807.4px;top:932px;width:10px;height:10px;border:1px solid #b4b4b8;border-radius:5px"></div>
<div class="a" id="t126" style="left:809.9px;top:930px;font-size:8.6px;line-height:14px;color:#9a9aa0;-webkit-text-stroke:0.2px currentColor">?</div>
<div class="a" id="t127" style="left:828px;top:930px;font-size:9px;line-height:14px;color:#0a66d8;letter-spacing:-0.017px">cache-control:</div>
<div class="a" id="t128" style="left:889.4px;top:930px;font-size:9px;line-height:14px;color:#2a2a2e;letter-spacing:0.016px">max-age=0, private, must-revalidate</div>
<div class="a" id="t129" style="left:828px;top:945px;font-size:9px;line-height:14px;color:#0a66d8;letter-spacing:0.054px">cf-cache-status:</div>
<div class="a" id="t130" style="left:897.5px;top:945px;font-size:9px;line-height:14px;color:#2a2a2e;transform:scaleX(0.9370);transform-origin:0 50%">DYNAMIC</div>
<div class="a" id="t131" style="left:828px;top:960px;font-size:9px;line-height:14px;color:#0a66d8;letter-spacing:-0.031px">cf-ray:</div>
<div class="a" id="t132" style="left:857.9px;top:960px;font-size:9px;line-height:14px;color:#2a2a2e;letter-spacing:0.011px">71b2f3152acdb860-AMS</div>
<div class="a" id="t133" style="left:828.9px;top:818px;font-size:9px;line-height:14px;color:#2a2a2e;transform:scaleX(0.9138);transform-origin:0 50%">TE, OPTIONS</div>
<div class="a" id="t134" style="left:828.9px;top:862px;font-size:9px;line-height:14px;color:#2a2a2e;letter-spacing:-0.127px">Page, X-Page, X-Next-Page, X-Prev-Page, X-Gitlab-Blob-Id, X-Gitlab-</div>
<div class="a" id="t135" style="left:828.9px;top:874px;font-size:9px;line-height:14px;color:#2a2a2e;letter-spacing:-0.038px">Commit-Id, X-Gitlab-Content-Sha256, X-Gitlab-Encoding, X-Gitlab-Fi</div>
<div class="a" id="t136" style="left:828.9px;top:887px;font-size:9px;line-height:14px;color:#2a2a2e;letter-spacing:-0.013px">le-Name, X-Gitlab-File-Path, X-Gitlab-Last-Commit-Id, X-Gitlab-Ref,</div>
<div class="a" id="t137" style="left:828.9px;top:901px;font-size:9px;line-height:14px;color:#2a2a2e;letter-spacing:-0.070px">X-Gitlab-Size</div>
<div class="a" style="left:807.4px;top:977.4px;width:10px;height:10px;border:1px solid #b4b4b8;border-radius:5px"></div>
<div class="a" style="left:1116px;top:668px;width:17px;height:311px;background:#f0f0f0"></div>
<div class="a" style="left:1116px;top:686px;width:16px;height:59.5px;background:#cdcdcd"></div>
<svg style="left:0;top:541px" width="1133" height="438" viewBox="0 541 1133 438" fill="none" stroke="#2a2a2e" stroke-width="1.200" stroke-linecap="round" stroke-linejoin="round">
  <!-- findbar arrows + close -->
  <path d="M240.800 565.400l5.700-5.800 5.700 5.800M270.800 559.600l5.700 5.800 5.700-5.800" stroke="#2a2a2e" stroke-width="1.300"/>
  <path d="M1107.300 556.300l11.600 11.600M1118.900 556.300l-11.600 11.600" stroke="#2a2a2e" stroke-width="1.300"/>
  <!-- picker -->
  <path d="M12.500 597.200h-4a1.600 1.600 0 0 1-1.600-1.600v-5a1.600 1.600 0 0 1 1.600-1.600h8.400a1.600 1.600 0 0 1 1.600 1.600v2" stroke-width="1.400"/>
  <path d="M13 592.400l5.600 2.400-2.400.9 2 2.400-1 .8-2-2.400-1.200 2z" fill="#2a2a2e" stroke-width=".6"/>
  <!-- network arrows -->
  <g stroke="#0060df" stroke-width="1.500">
    <path d="M36.600 597.400v-8.600M33.800 591.600l2.800-2.900 2.800 2.900M42.500 588.800v8.600M39.700 594.600l2.800 2.900 2.800-2.900"/>
  </g>
  <!-- inspector -->
  <rect x="101.600" y="589.200" width="7.600" height="7.600" rx="1.600" stroke-width="1.400"/>
  <path d="M105.400 587.600v1.600M105.400 596.800v1.600M100 593h1.600M109.200 593h1.600" stroke-width="1.200"/>
  <!-- storage -->
  <rect x="172.600" y="588.200" width="9" height="10" rx="1.600" stroke-width="1.400"/>
  <path d="M172.600 593.200h9M175.600 590.700h3M175.600 595.700h3" stroke-width="1.100"/>
  <!-- console -->
  <rect x="234.800" y="588.600" width="10.400" height="9" rx="1.600" stroke-width="1.400"/>
  <path d="M237.600 591.200l2 1.900-2 1.900" stroke-width="1.100"/>
  <!-- debugger -->
  <path d="M301 589.200h6.400l3.600 3.800-3.600 3.800H301z" stroke-width="1.400"/>
  <!-- performance -->
  <path d="M377.200 597.200a5.300 5.300 0 1 1 6.800 0" stroke-width="1.400"/>
  <path d="M380.600 596.400l1.600-4.200" stroke-width="1.400"/>
  <circle cx="380.600" cy="596.400" r="1.100" fill="#2a2a2e" stroke="none"/>
  <!-- style editor braces -->
  <path d="M464.200 588.400c-1.400 0-1.800.6-1.800 1.600v1.600c0 .8-.4 1.300-1.200 1.400.8.100 1.200.6 1.200 1.400v1.600c0 1 .4 1.600 1.800 1.600M468 588.400c1.400 0 1.800.6 1.800 1.600v1.600c0 .8.400 1.300 1.200 1.400-.8.100-1.200.6-1.200 1.400v1.600c0 1-.4 1.600-1.800 1.600" stroke-width="1.300"/>
  <!-- memory chip -->
  <rect x="541.800" y="588.400" width="5.800" height="9.400" rx="1.400" stroke-width="1.400"/>
  <path d="M539.400 590.400h1.400M539.400 593h1.400M539.400 595.600h1.400M548.600 590.400h1.400M548.600 593h1.400M548.600 595.600h1.400" stroke-width="1"/>
  <!-- accessibility -->
  <g fill="#2a2a2e" stroke="none">
    <circle cx="612.200" cy="588.800" r="1.500"/>
    <path d="M607.400 590.600h9.800v1.500h-3.300v2.600l1.300 3.900h-1.500l-1.300-3.400-1.300 3.400h-1.500l1.300-3.900v-2.600h-3.500z"/>
  </g>
  <!-- application grid -->
  <g stroke="#8a8a90" stroke-width=".9">
    <rect x="689" y="588.200" width="2.400" height="2.400"/><rect x="693" y="588.200" width="2.400" height="2.400"/><rect x="697" y="588.200" width="2.400" height="2.400"/>
    <rect x="689" y="592" width="2.400" height="2.400"/><rect x="693" y="592" width="2.400" height="2.400"/><rect x="697" y="592" width="2.400" height="2.400"/>
    <rect x="689" y="595.800" width="2.400" height="2.400"/><rect x="693" y="595.800" width="2.400" height="2.400"/><rect x="697" y="595.800" width="2.400" height="2.400"/>
  </g>
  <!-- DOM -->
  <path d="M771.400 588.600l-3.800 3.600 3.800 3.600M775 590.600l3.800 3.600-3.800 3.600" stroke-width="1.500"/>
  <!-- cookie editor -->
  <circle cx="827" cy="593" r="5.800" fill="#b8733f" stroke="#8a5226" stroke-width=".6"/>
  <g fill="#3a2414" stroke="none"><circle cx="825" cy="591" r=".9"/><circle cx="829" cy="592" r=".9"/><circle cx="826" cy="595.400" r=".9"/><circle cx="829.600" cy="595.600" r=".8"/><circle cx="828" cy="589.200" r=".7"/></g>
  <!-- responsive mode / more / close -->
  <path d="M1078 590v-1.400a1 1 0 0 1 1-1h6a1 1 0 0 1 1 1v8.800a1 1 0 0 1-1 1h-3.400" stroke-width="1.200"/>
  <rect x="1075.200" y="590.600" width="4.600" height="7.800" rx="1" stroke-width="1.200"/>
  <g fill="#2a2a2e" stroke="none"><circle cx="1096.400" cy="593" r="1.300"/><circle cx="1101.600" cy="593" r="1.300"/><circle cx="1106.800" cy="593" r="1.300"/></g>
  <path d="M1118.600 589l8 8M1126.600 589l-8 8" stroke-width="1.300"/>
  <!-- trash -->
  <path d="M9.800 613.200h6.600v7.200a1.400 1.400 0 0 1-1.400 1.400h-3.800a1.400 1.400 0 0 1-1.400-1.400zM8.400 613.200h9.400M11.200 613v-1.200a.8.800 0 0 1 .8-.8h2.200a.8.800 0 0 1 .8.800v1.200M11.900 615.400v4M14.300 615.400v4" stroke-width="1.200"/>
  <!-- funnel -->
  <path d="M35.400 613h6.400l-2.400 3.200v3.600l-1.600-.8v-2.800z" stroke="#a0a0a6" stroke-width="1"/>
  <!-- pause / search / block -->
  <path d="M575.500 612.400v7.200M581.500 612.400v7.200" stroke="#55555a" stroke-width="1"/>
  <circle cx="599.200" cy="615.200" r="3.600" stroke-width="1.400"/>
  <path d="M601.800 618l4 4" stroke-width="1.600"/>
  <circle cx="623" cy="616.400" r="4.600" stroke-width="1.500"/>
  <path d="M619.800 613.200l6.400 6.400" stroke-width="1.500"/>
  <!-- throttling updown -->
  <path d="M1092.800 614.800l1.800-2.200 1.800 2.200zM1092.800 617.200l1.800 2.200 1.800-2.200z" fill="#2a2a2e" stroke-width=".5"/>
  <!-- gear -->
  <circle cx="1119.400" cy="616.800" r="3" stroke-width="1.500"/>
  <path d="M1119.400 610.800v2.200M1119.400 620.600v2.200M1113.400 616.800h2.200M1123.200 616.800h2.200M1115.200 612.600l1.500 1.500M1122.100 619.500l1.500 1.500M1115.200 621l1.500-1.500M1122.100 614.100l1.500-1.500" stroke-width="1.500"/>
  <!-- lock in row -->
  <rect x="92" y="657.400" width="7" height="5.600" rx="1" fill="#fff" stroke="none"/>
  <path d="M93.600 657.400v-1.600a1.900 1.900 0 0 1 3.800 0v1.600" stroke="#fff" stroke-width="1.200"/>
  <!-- stopwatch -->
  <circle cx="13.600" cy="970" r="4.800" stroke-width="1.400"/>
  <path d="M13.600 970l2-2.400M11.800 963.400h3.600" stroke-width="1.300"/>
  <!-- panel toggle -->
  <rect x="804" y="633.800" width="10" height="9.400" rx="1" stroke="#6a6a70" stroke-width="1"/>
  <path d="M806.600 633.800v9.400" stroke="#6a6a70" stroke-width="1"/>
  <path d="M809 636.400l2.800 2.100-2.800 2.100z" fill="#6a6a70" stroke="none"/>
  <!-- stack dropdown + resend arrows -->
  <path d="M1124.600 635.400l2.800 3.200 2.800-3.200z" fill="#2a2a2e" stroke="none"/>
  <path d="M1124.400 656.600l1.800-2.200 1.800 2.200zM1124.400 659l1.800 2.200 1.800-2.200z" fill="#2a2a2e" stroke-width=".5"/>
  <!-- filter headers funnel -->
  <path d="M804.600 654.600h6.400l-2.400 3.200v3.600l-1.600-.8v-2.800z" stroke="#a0a0a6" stroke-width="1"/>
  <!-- twisties -->
  <path d="M805 678.600l3.800 3.400-3.800 3.400z" fill="#a4a4a8" stroke="none"/>
  <path d="M803.800 776.400l2.900 3.400 2.900-3.400z" fill="#6a6a70" stroke="none"/>
  <!-- scrollbar arrows -->
  <path d="M1120.500 678.600l4-4.400 4 4.400" stroke="#505050" stroke-width="2" stroke-linecap="butt" stroke-linejoin="miter"/>
  <path d="M1120.500 968.600l4 4.400 4-4.400" stroke="#505050" stroke-width="2" stroke-linecap="butt" stroke-linejoin="miter"/>
</svg>
<div class="a" style="left:1133px;top:0px;width:2px;height:981px;background:#6e6e6e"></div>
<div class="a" style="left:0px;top:979px;width:1135px;height:2px;background:#6e6e6e"></div>
</body>
</html>
